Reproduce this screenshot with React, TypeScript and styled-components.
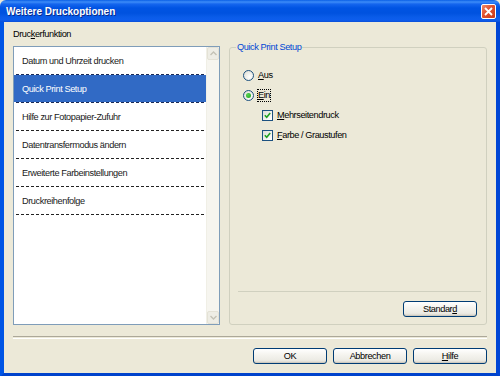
import React from "react";
import styled, { createGlobalStyle } from "styled-components";

const GlobalStyle = createGlobalStyle`
  html, body { margin: 0; padding: 0; background: #ECE9D8; }
  body { font-family: "Liberation Sans", Arial, sans-serif; }
`;

const uiFont = `
  font-family: "Liberation Sans", Arial, sans-serif;
  font-size: 9.2px;
  letter-spacing: -0.42px;
`;

const Window = styled.div`
  width: 500px;
  height: 376px;
  display: flex;
  flex-direction: column;
  box-sizing: border-box;
  overflow: hidden;
`;

const TitleBar = styled.div`
  height: 22px;
  flex: none;
  display: flex;
  align-items: center;
  justify-content: space-between;
  padding: 0 4px 0 6px;
  background: linear-gradient(
    to bottom,
    #0a5fe6 0px,
    #3d8cf8 2px,
    #1566ee 4px,
    #0054e3 8px,
    #0052df 13px,
    #0a5ce8 17px,
    #0d5ded 20px,
    #0a4fd8 22px
  );
  border-radius: 6px 6px 0 0;
  box-sizing: border-box;
`;

const Title = styled.span`
  font-family: "Liberation Sans", Arial, sans-serif;
  font-weight: bold;
  font-size: 10px;
  color: #ffffff;
  text-shadow: 1px 1px 0 #0a2a8a;
`;

const CloseButton = styled.div`
  width: 15px;
  height: 15px;
  box-sizing: border-box;
  border: 1px solid #ffffff;
  border-radius: 2px;
  background: linear-gradient(135deg, #f08a68 0%, #e0512f 45%, #c83a18 100%);
  display: flex;
  align-items: center;
  justify-content: center;
`;

const Body = styled.div`
  flex: 1;
  display: flex;
  flex-direction: column;
  background: #ece9d8;
  border-left: 4px solid #0055e5;
  border-right: 4px solid #0046d5;
  border-bottom: 4px solid #0043cc;
  padding: 7px 9px 9px 9px;
  box-sizing: border-box;
  ${uiFont}
`;

const MainRow = styled.div`
  display: flex;
  gap: 9px;
  height: 296px;
  flex: none;
`;

const LeftCol = styled.div`
  width: 207px;
  display: flex;
  flex-direction: column;
`;

const FieldLabel = styled.div`
  height: 17px;
  line-height: 11px;
  color: #000;
  box-sizing: border-box;
`;

const ListBox = styled.div`
  flex: 1;
  display: flex;
  border: 1px solid #7f9db9;
  background: #fff;
`;

const ListItems = styled.div`
  flex: 1;
  display: flex;
  flex-direction: column;
`;

const Item = styled.div<{ $selected?: boolean }>`
  height: 27px;
  display: flex;
  align-items: center;
  padding-left: 8px;
  color: ${(p) => (p.$selected ? "#ffffff" : "#1a1a1a")};
  background: ${(p) => (p.$selected ? "#316ac5" : "transparent")};
`;

const Dash = styled.div<{ $focus?: boolean }>`
  height: 1px;
  flex: none;
  margin: 0 1px 0 2px;
  background-image: repeating-linear-gradient(
    to right,
    ${(p) => (p.$focus ? "#1a2a55" : "#222")} 0px,
    ${(p) => (p.$focus ? "#1a2a55" : "#222")} 3px,
    ${(p) => (p.$focus ? "#ffffff" : "transparent")} 3px,
    ${(p) => (p.$focus ? "#ffffff" : "transparent")} 5px
  );
`;

const ScrollBar = styled.div`
  width: 13px;
  display: flex;
  flex-direction: column;
  justify-content: space-between;
  background: #f6f5ef;
  border-left: 1px solid #f0efe6;
  box-sizing: border-box;
`;

const ScrollBtn = styled.div`
  height: 13px;
  box-sizing: border-box;
  border: 1px solid #e4e2d6;
  border-radius: 2px;
  background: #eeede5;
  display: flex;
  align-items: center;
  justify-content: center;
`;

const Group = styled.fieldset`
  flex: 1;
  margin: 12px 0 0 0;
  padding: 12px 9px 7px 13px;
  border: 1px solid #d0d0bf;
  border-radius: 3px;
  min-width: 0;
  display: flex;
  flex-direction: column;
  box-sizing: border-box;
`;

const Legend = styled.legend`
  padding: 0 1px;
  margin-left: -7px;
  line-height: 12px;
  color: #0046d5;
`;

const OptionRow = styled.div<{ $indent?: boolean }>`
  height: 20px;
  display: flex;
  align-items: center;
  gap: 3px;
  padding-left: ${(p) => (p.$indent ? "19px" : "0")};
  color: #000;
`;

const Radio = styled.span<{ $checked?: boolean }>`
  width: 11px;
  height: 11px;
  border-radius: 50%;
  box-sizing: border-box;
  border: 1px solid #1c5180;
  background: radial-gradient(circle at 65% 65%, #ffffff 0%, #e6e6de 70%, #d4d3c8 100%);
  display: flex;
  align-items: center;
  justify-content: center;
  &::after {
    content: "";
    width: 5px;
    height: 5px;
    border-radius: 50%;
    background: ${(p) =>
      p.$checked ? "radial-gradient(circle at 35% 35%, #55d34f, #21a121)" : "transparent"};
  }
`;

const Check = styled.span`
  width: 11px;
  height: 11px;
  box-sizing: border-box;
  border: 1px solid #1c5180;
  background: linear-gradient(135deg, #dcdcd5 0%, #ffffff 90%);
  display: flex;
  align-items: center;
  justify-content: center;
`;

const OptText = styled.span<{ $focus?: boolean }>`
  padding: 1px 1px;
  outline: ${(p) => (p.$focus ? "1px dotted #000" : "none")};
  outline-offset: -1px;
  line-height: 11px;
`;

const Spacer = styled.div`
  flex: 1;
`;

const GroupDivider = styled.div`
  height: 1px;
  background: #d0d0bf;
  margin: 0 -4px 0 -5px;
`;

const GroupFooter = styled.div`
  display: flex;
  justify-content: flex-end;
  margin-top: 9px;
`;

const Button = styled.button`
  width: 74px;
  height: 16px;
  padding: 0;
  box-sizing: border-box;
  border: 1px solid #003c74;
  border-radius: 3px;
  background: linear-gradient(to bottom, #ffffff 0%, #f5f4ef 40%, #ecebe4 80%, #d6d0c5 100%);
  ${uiFont}
  line-height: 12px;
  color: #000;
  box-shadow: inset 0 -1px 0 #cdcac0;
`;

const Divider = styled.div`
  height: 1px;
  margin-top: 11px;
  border-top: 1px solid #aca899;
  border-bottom: 1px solid #ffffff;
  flex: none;
`;

const ButtonRow = styled.div`
  display: flex;
  justify-content: flex-end;
  gap: 6px;
  margin-top: 9px;
`;

const items = [
  "Datum und Uhrzeit drucken",
  "Quick Print Setup",
  "Hilfe zur Fotopapier-Zufuhr",
  "Datentransfermodus ändern",
  "Erweiterte Farbeinstellungen",
  "Druckreihenfolge",
];

const selectedIndex = 1;

const CheckMark = () => (
  <svg width="7" height="7" viewBox="0 0 7 7">
    <path d="M0.8 3.2 L2.7 5.2 L6.2 1" stroke="#21a121" strokeWidth="1.6" fill="none" />
  </svg>
);

const Chevron = ({ up }: { up?: boolean }) => (
  <svg width="7" height="5" viewBox="0 0 7 5">
    <path
      d={up ? "M0.5 4 L3.5 1 L6.5 4" : "M0.5 1 L3.5 4 L6.5 1"}
      stroke="#c4c2b6"
      strokeWidth="1.4"
      fill="none"
    />
  </svg>
);

export default function App() {
  return (
    <>
      <GlobalStyle />
      <Window>
        <TitleBar>
          <Title>Weitere Druckoptionen</Title>
          <CloseButton>
            <svg width="9" height="9" viewBox="0 0 9 9">
              <path d="M1 1 L8 8 M8 1 L1 8" stroke="#ffffff" strokeWidth="1.8" />
            </svg>
          </CloseButton>
        </TitleBar>
        <Body>
          <MainRow>
            <LeftCol>
              <FieldLabel>
                Druc<u>k</u>erfunktion
              </FieldLabel>
              <ListBox>
                <ListItems>
                  {items.map((it, i) => (
                    <React.Fragment key={it}>
                      <Item $selected={i === selectedIndex}>{it}</Item>
                      <Dash $focus={i === selectedIndex || i === selectedIndex - 1} />
                    </React.Fragment>
                  ))}
                </ListItems>
                <ScrollBar>
                  <ScrollBtn>
                    <Chevron up />
                  </ScrollBtn>
                  <ScrollBtn>
                    <Chevron />
                  </ScrollBtn>
                </ScrollBar>
              </ListBox>
            </LeftCol>
            <Group>
              <Legend>Quick Print Setup</Legend>
              <OptionRow>
                <Radio />
                <OptText>
                  <u>A</u>us
                </OptText>
              </OptionRow>
              <OptionRow>
                <Radio $checked />
                <OptText $focus>
                  <u>E</u>in
                </OptText>
              </OptionRow>
              <OptionRow $indent>
                <Check>
                  <CheckMark />
                </Check>
                <OptText>
                  <u>M</u>ehrseitendruck
                </OptText>
              </OptionRow>
              <OptionRow $indent>
                <Check>
                  <CheckMark />
                </Check>
                <OptText>
                  <u>F</u>arbe / Graustufen
                </OptText>
              </OptionRow>
              <Spacer />
              <GroupDivider />
              <GroupFooter>
                <Button>
                  Standar<u>d</u>
                </Button>
              </GroupFooter>
            </Group>
          </MainRow>
          <Divider />
          <ButtonRow>
            <Button>OK</Button>
            <Button>Abbrechen</Button>
            <Button>
              <u>H</u>ilfe
            </Button>
          </ButtonRow>
        </Body>
      </Window>
    </>
  );
}
